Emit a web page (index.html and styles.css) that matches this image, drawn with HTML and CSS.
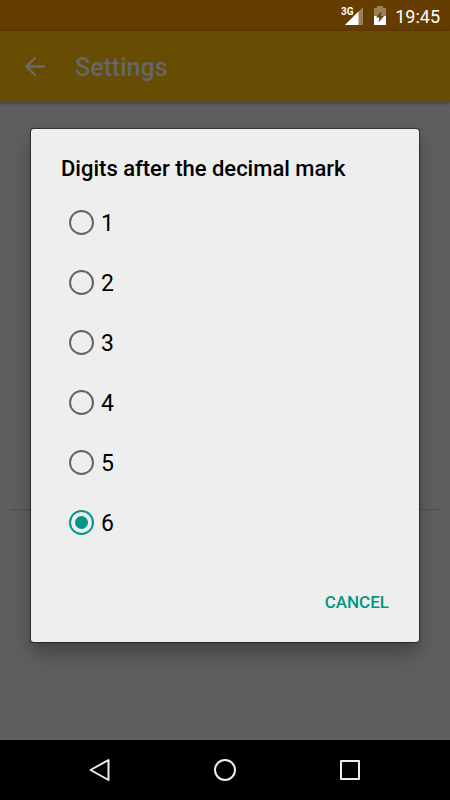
FILE: index.html
```
<!DOCTYPE html>
<html lang="en">
<head>
    <meta charset="UTF-8">
    <meta name="viewport" content="width=device-width, initial-scale=1.0">
    <title>Settings</title>
    <link rel="stylesheet" href="styles.css">
</head>
<body>
    <div class="status-bar">
        <svg class="signal" width="24" height="20" viewBox="0 0 24 20" aria-hidden="true">
            <path d="M22 1v18H4z" fill="#fff" opacity=".35"/>
            <path d="M17.500 5.500V19H4z" fill="#fff"/>
            <text class="network" x="0" y="9">3G</text>
        </svg>
        <svg class="battery" width="14" height="20" viewBox="0 0 14 20" aria-hidden="true">
            <path d="M4 0h6v2h3v8H1V2h3z" fill="#fff" opacity=".35"/>
            <path d="M1 10h12v9H1z" fill="#fff"/>
            <path d="M8.500 5 3 11.500h3.500L5.500 16.500l5.500-6.500H7.500z" fill="#663d00"/>
        </svg>
        <span class="clock">19:45</span>
    </div>

    <div class="window">
        <header class="toolbar">
            <button class="back" aria-label="Back">
                <svg width="20" height="20" viewBox="0 0 20 20">
                    <path d="M20 9.500H2M10.500 .500 1.500 9.500l9 9" fill="none" stroke="currentColor" stroke-width="2.400"/>
                </svg>
            </button>
            <h1>Settings</h1>
        </header>
        <main class="preferences">
            <hr>
        </main>

        <div class="overlay">
            <form class="dialog" role="dialog" aria-labelledby="dialog-title">
                <h2 id="dialog-title">Digits after the decimal mark</h2>
                <div class="options">
                    <label><input type="radio" name="digits" value="1"><span>1</span></label>
                    <label><input type="radio" name="digits" value="2"><span>2</span></label>
                    <label><input type="radio" name="digits" value="3"><span>3</span></label>
                    <label><input type="radio" name="digits" value="4"><span>4</span></label>
                    <label><input type="radio" name="digits" value="5"><span>5</span></label>
                    <label><input type="radio" name="digits" value="6" checked><span>6</span></label>
                </div>
                <div class="actions">
                    <button type="button" class="cancel">CANCEL</button>
                </div>
            </form>
        </div>
    </div>

    <nav class="nav-bar">
        <button aria-label="Back">
            <svg width="24" height="24" viewBox="0 0 24 24">
                <path d="M20.500 2v20L2.500 12z"/>
            </svg>
        </button>
        <button aria-label="Home">
            <svg width="24" height="24" viewBox="0 0 24 24">
                <circle cx="12" cy="12" r="10"/>
            </svg>
        </button>
        <button aria-label="Recent apps">
            <svg width="24" height="24" viewBox="0 0 24 24">
                <rect x="3" y="3" width="18" height="18"/>
            </svg>
        </button>
    </nav>
</body>
</html>
```
FILE: styles.css
```
* {
    box-sizing: border-box;
}

body {
    display: flex;
    flex-direction: column;
    min-height: 100vh;
    margin: 0;
    font-family: Roboto, "Liberation Sans", sans-serif;
    background-color: #5f5f5f;
}

h1, h2 {
    margin: 0;
    font-weight: 500;
}

button {
    padding: 0;
    border: none;
    background: none;
    font-family: inherit;
    cursor: pointer;
}

svg {
    display: block;
}

.status-bar {
    display: flex;
    align-items: center;
    justify-content: flex-end;
    height: 31px;
    padding: 1px 10px 0 0;
    color: #fff;
    background-color: #663d00;
}

.network {
    font-size: 10px;
    font-weight: 700;
    fill: #fff;
    stroke: #663d00;
    stroke-width: 2px;
    paint-order: stroke;
}

.battery {
    margin: 0 8px;
}

.clock {
    font-size: 18px;
    font-weight: 400;
}

.window {
    position: relative;
    display: flex;
    flex: 1;
    flex-direction: column;
}

.toolbar {
    display: flex;
    align-items: center;
    gap: 30px;
    height: 71px;
    padding: 0 25px;
    color: #666;
    background-color: #664d03;
    box-shadow: 0 1px 4px rgba(0, 0, 0, .4);
}

.back {
    color: #6a6a6a;
}

.toolbar h1 {
    padding-top: 2px;
    font-size: 25px;
}

.preferences {
    flex: 1;
    padding: 407px 10px 0;
}

.preferences hr {
    height: 1px;
    margin: 0;
    border: none;
    background-color: #505050;
}

/* dialog */
.overlay {
    position: absolute;
    inset: 0;
    display: flex;
    align-items: center;
    padding: 0 31px;
}

.dialog {
    width: 100%;
    padding: 25px 30px 20px;
    border-radius: 3px;
    background-color: #eee;
    box-shadow: 0 0 1px 1px rgba(0, 0, 0, .5), 0 11px 20px rgba(0, 0, 0, .3);
}

.dialog h2 {
    font-size: 22px;
    line-height: 30px;
    color: #000;
}

.options {
    padding: 8px;
}

.options label {
    display: flex;
    align-items: center;
    gap: 7px;
    height: 60px;
    font-size: 23px;
    cursor: pointer;
}

.options span {
    padding-top: 2px;
}

.options input {
    display: flex;
    align-items: center;
    justify-content: center;
    appearance: none;
    width: 25px;
    height: 25px;
    margin: 0;
    border: 2px solid #646464;
    border-radius: 50%;
}

.options input:checked {
    border-color: #009688;
}

.options input:checked::before {
    content: '';
    width: 13px;
    height: 13px;
    border-radius: 50%;
    background-color: #009688;
}

.actions {
    display: flex;
    justify-content: flex-end;
    padding-top: 22px;
}

.cancel {
    height: 40px;
    font-size: 17px;
    font-weight: 500;
    color: #009688;
}

/* system buttons */
.nav-bar {
    display: flex;
    align-items: center;
    justify-content: center;
    gap: 101px;
    height: 60px;
    background-color: #000;
}

.nav-bar svg {
    fill: none;
    stroke: #eee;
    stroke-width: 2px;
    stroke-linejoin: round;
}
```
